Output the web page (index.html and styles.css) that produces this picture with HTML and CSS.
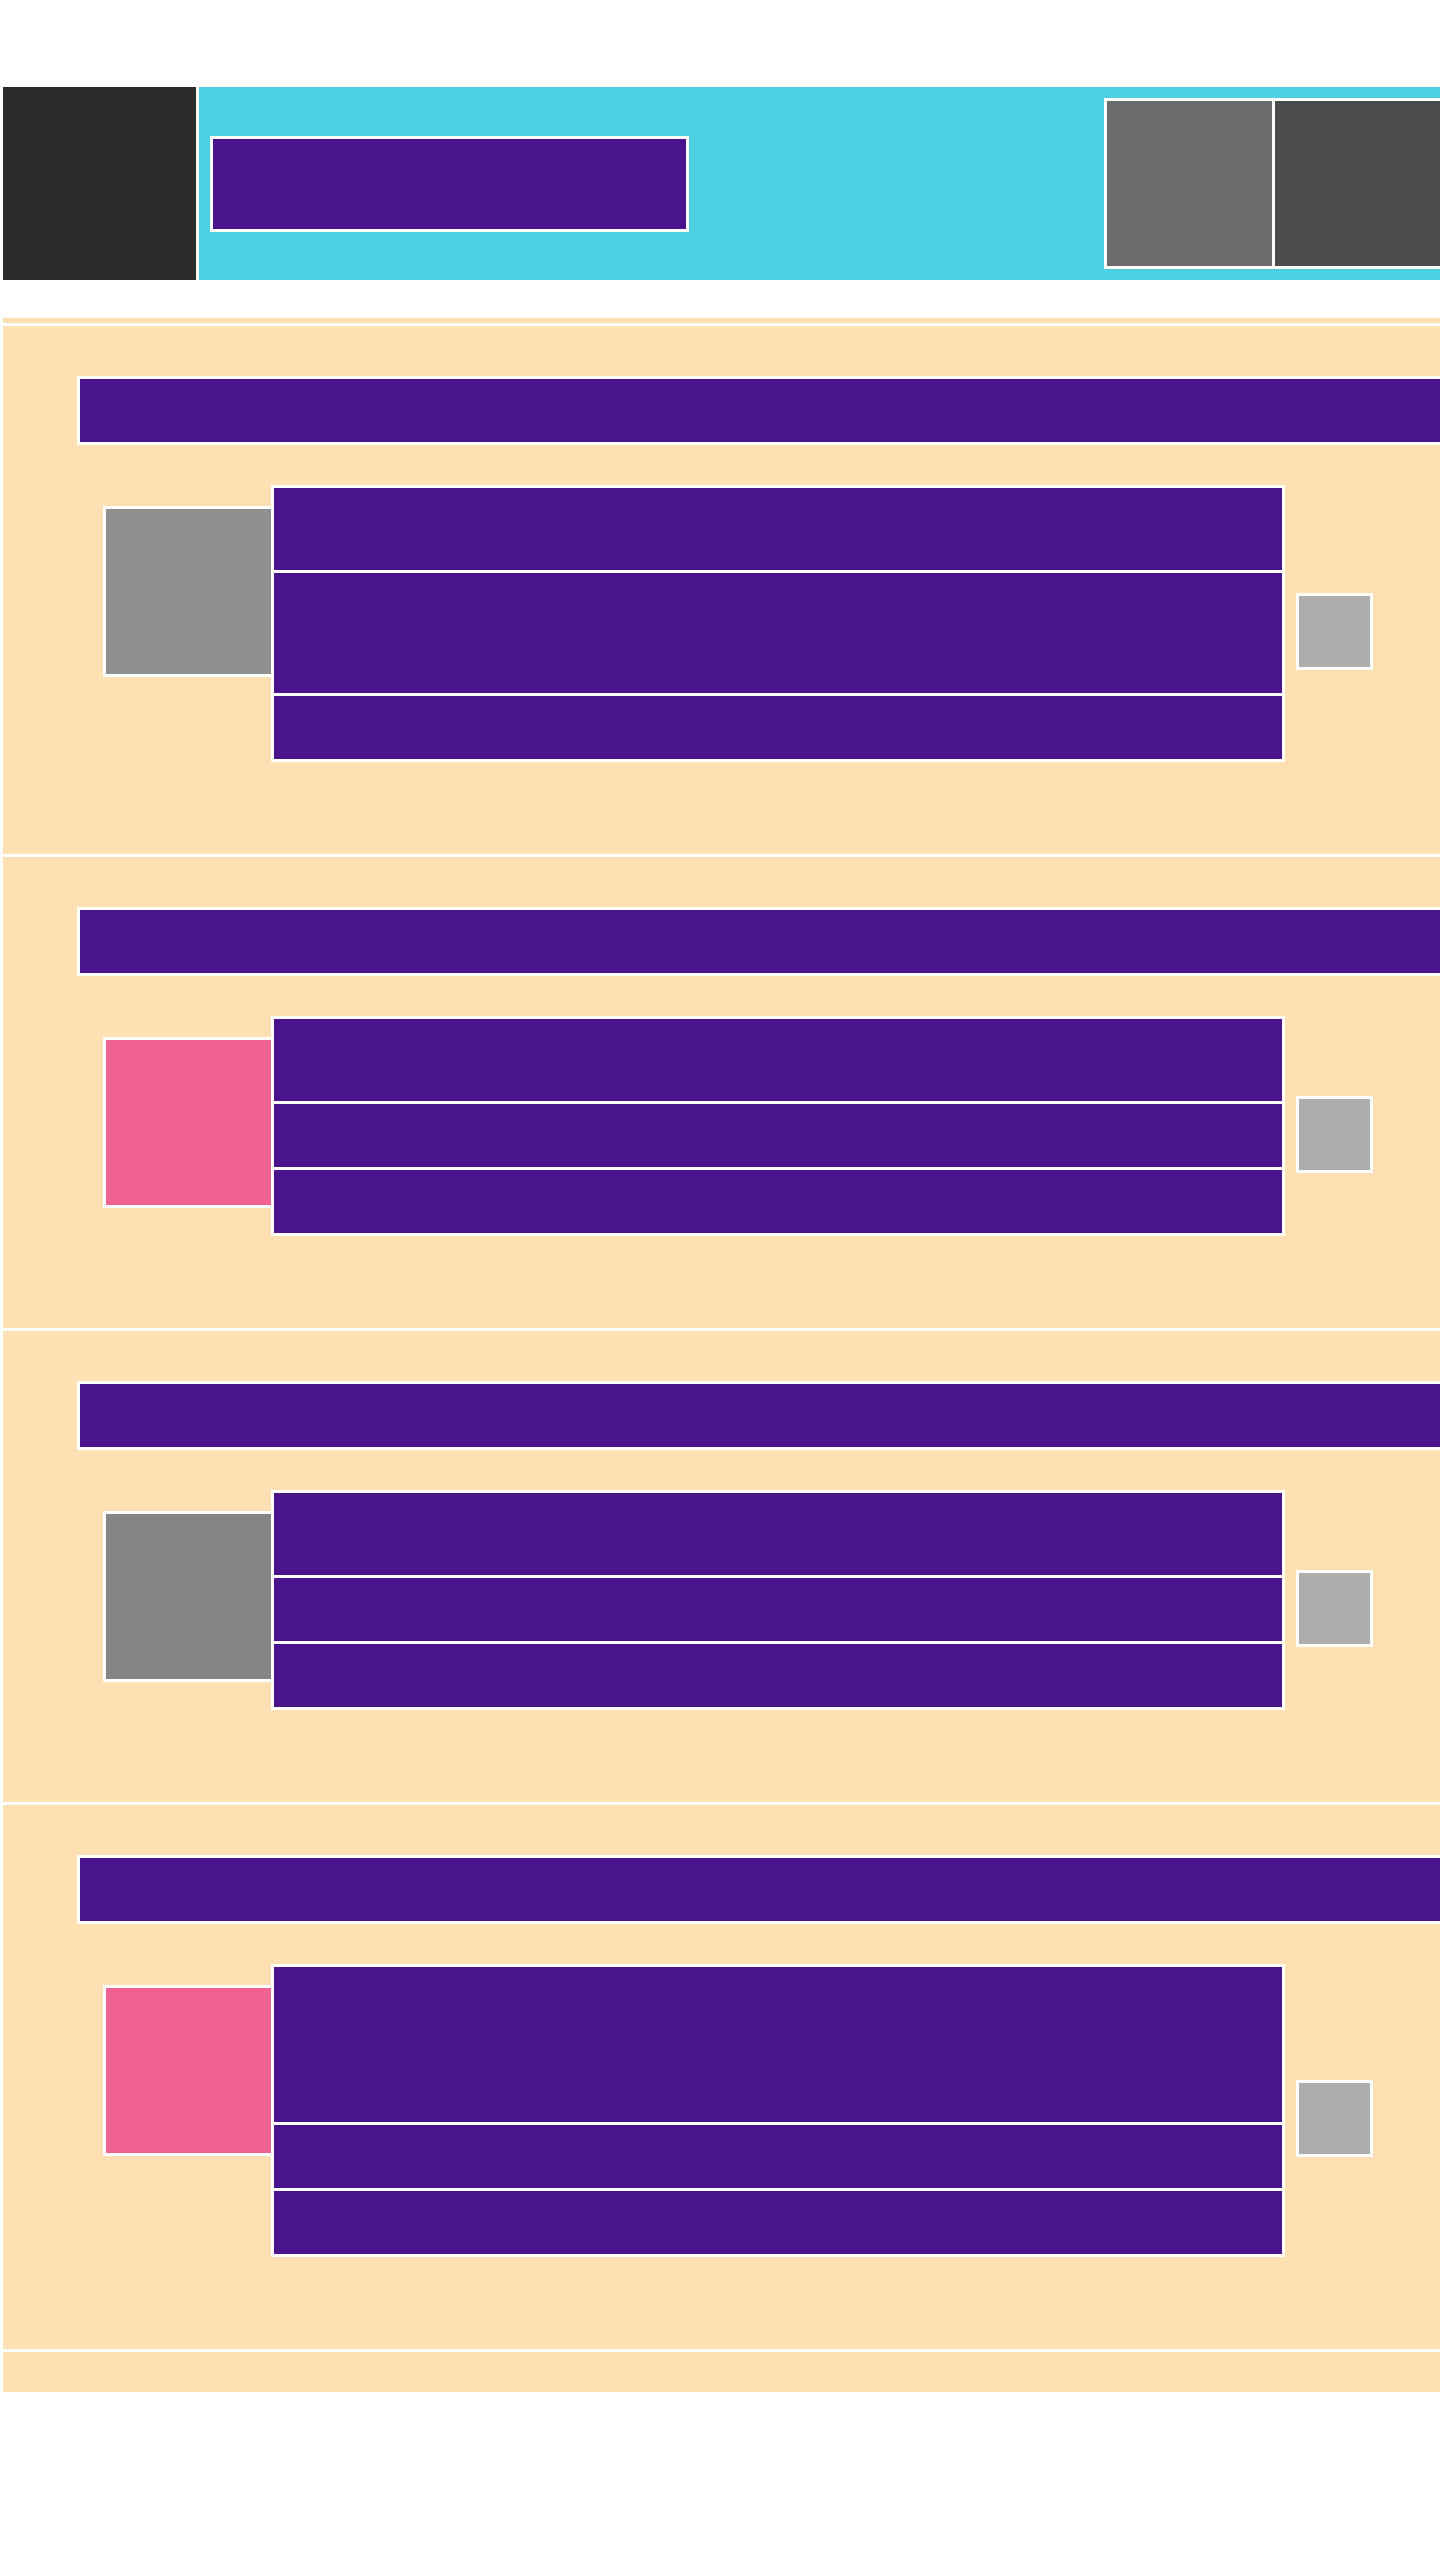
FILE: index.html
```html
<!DOCTYPE html>
<html lang="en">
<head>
<meta charset="utf-8">
<title>Layout</title>
<link rel="stylesheet" href="styles.css">
</head>
<body>
<div class="page">
  <header class="header">
    <div class="logo"></div>
    <div class="bar">
      <div class="brand"></div>
      <div class="actions">
        <div class="action action-a"></div>
        <div class="action action-b"></div>
      </div>
    </div>
  </header>

  <main class="main">
    <section class="section">
      <div class="title"></div>
      <div class="item">
        <div class="thumb thumb-grey"></div>
        <div class="rows">
          <div class="row row-md"></div>
          <div class="row row-lg"></div>
          <div class="row row-sm"></div>
        </div>
        <div class="side"></div>
      </div>
    </section>

    <section class="section">
      <div class="title"></div>
      <div class="item">
        <div class="thumb thumb-pink"></div>
        <div class="rows">
          <div class="row row-md"></div>
          <div class="row row-sm"></div>
          <div class="row row-sm"></div>
        </div>
        <div class="side"></div>
      </div>
    </section>

    <section class="section">
      <div class="title"></div>
      <div class="item">
        <div class="thumb thumb-dark"></div>
        <div class="rows">
          <div class="row row-md"></div>
          <div class="row row-sm"></div>
          <div class="row row-sm"></div>
        </div>
        <div class="side"></div>
      </div>
    </section>

    <section class="section section-last">
      <div class="title"></div>
      <div class="item">
        <div class="thumb thumb-pink"></div>
        <div class="rows">
          <div class="row row-xl"></div>
          <div class="row row-sm"></div>
          <div class="row row-sm"></div>
        </div>
        <div class="side"></div>
      </div>
    </section>
  </main>
</div>
</body>
</html>
```

FILE: styles.css
```css
html, body {
  margin: 0;
  padding: 0;
  background: #ffffff;
  font-family: "Liberation Sans", Arial, sans-serif;
}

.page {
  width: 1440px;
  overflow: hidden;
}

/* Header */
.header {
  display: flex;
  height: 193px;
  margin-top: 87px;
  padding-left: 3px;
  gap: 3px;
  overflow: hidden;
}

.logo {
  width: 193px;
  flex: none;
  background: #2b2b2b;
}

.bar {
  flex: 1;
  display: flex;
  align-items: center;
  justify-content: space-between;
  padding-left: 11px;
  background: #4dd0e1;
}

.brand {
  box-sizing: border-box;
  width: 479px;
  height: 96px;
  border: 3px solid #ffffff;
  background: #4a148c;
}

.actions {
  display: flex;
  gap: 3px;
  padding: 3px;
  margin-right: -3px;
  background: #ffffff;
}

.action {
  width: 165px;
  height: 165px;
}

.action-a { background: #6b6b6b; }
.action-b { background: #4b4b4b; }

/* Main list */
.main {
  margin-top: 38px;
  margin-left: 3px;
  padding-top: 5px;
  padding-bottom: 40px;
  background: #ffe0b2;
}

.section {
  border-top: 3px solid #ffffff;
  padding: 50px 0 92px;
  background: #ffe0b2;
}

.section-last {
  border-bottom: 3px solid #ffffff;
}

.title {
  box-sizing: border-box;
  height: 69px;
  margin-left: 74px;
  margin-right: -6px;
  border: 3px solid #ffffff;
  background: #4a148c;
}

.item {
  display: flex;
  align-items: flex-start;
  margin-top: 40px;
  padding-left: 100px;
}

.thumb {
  box-sizing: border-box;
  flex: none;
  width: 168px;
  height: 171px;
  margin-top: 21px;
  border: 3px solid #ffffff;
  border-right: 0;
}

.thumb-grey { background: #909090; }
.thumb-dark { background: #868686; }
.thumb-pink { background: #f06292; }

.rows {
  flex: none;
  width: 1008px;
  display: flex;
  flex-direction: column;
  gap: 3px;
  padding: 3px;
  background: #ffffff;
}

.row {
  background: #4a148c;
}

.row-sm { height: 63px; }
.row-md { height: 82px; }
.row-lg { height: 120px; }
.row-xl { height: 155px; }

.side {
  box-sizing: border-box;
  flex: none;
  width: 77px;
  height: 77px;
  margin-left: 11px;
  margin-top: 16px;
  align-self: center;
  border: 3px solid #ffffff;
  background: #adadad;
}
```
